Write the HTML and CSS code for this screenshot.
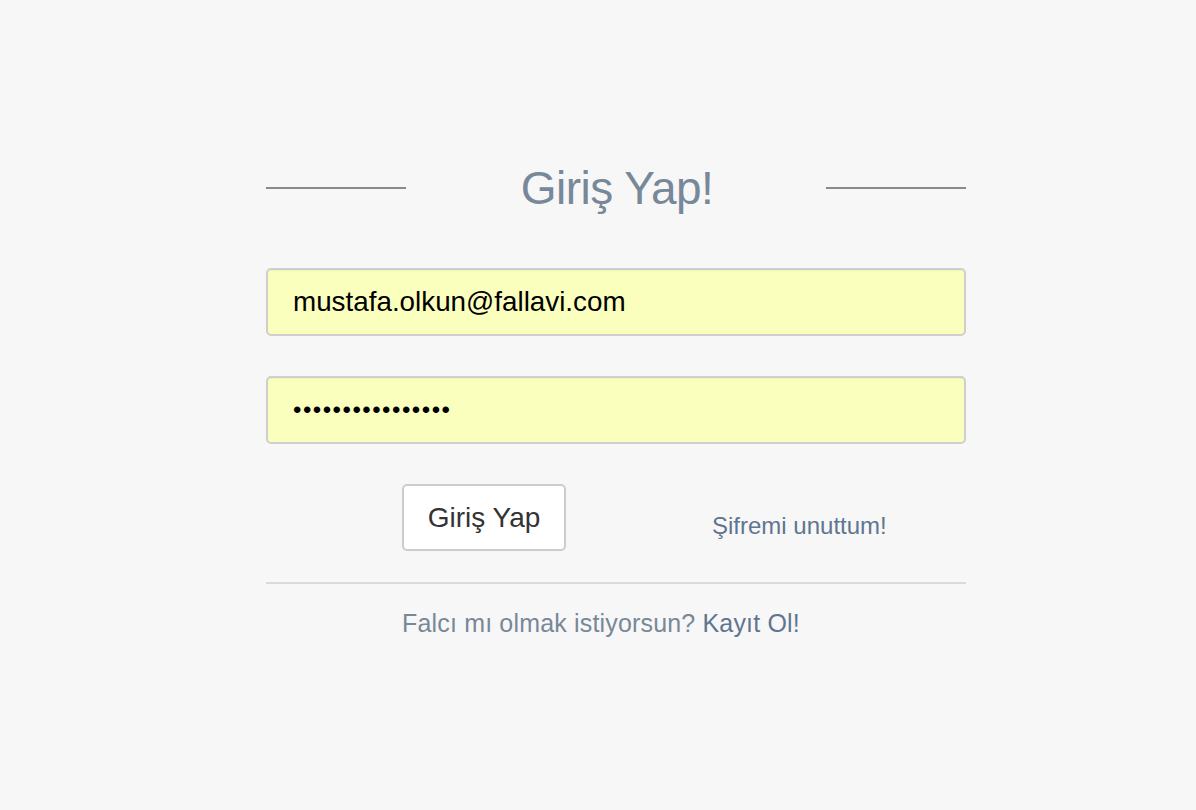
FILE: index.html
```html
<!DOCTYPE html>
<html lang="tr">
<head>
<meta charset="utf-8">
<title>Giriş Yap</title>
<link rel="stylesheet" href="styles.css">
</head>
<body>
<div class="page">
<main class="login">
  <div class="heading">
    <span class="heading-line"></span>
    <h1 class="heading-title">Giriş Yap!</h1>
    <span class="heading-line"></span>
  </div>
  <form class="form">
    <input class="field" type="email" value="mustafa.olkun@fallavi.com">
    <input class="field field-password" type="password" value="abcdefghijklmnop">
    <div class="actions">
      <button class="btn" type="button">Giriş Yap</button>
      <a class="forgot" href="#">Şifremi unuttum!</a>
    </div>
  </form>
  <hr class="divider">
  <p class="signup">Falcı mı olmak istiyorsun? <a class="signup-link" href="#">Kayıt Ol!</a></p>
</main>
</div>
</body>
</html>
```
FILE: styles.css
```css
html, body {
  margin: 0;
  padding: 0;
  background: #f7f7f7;
  font-family: "Liberation Sans", Arial, Helvetica, sans-serif;
}

.page {
  width: 736px;
  margin: 0 auto;
  padding-left: 36px;
  box-sizing: border-box;
}

.login {
  width: 700px;
  padding-top: 163px;
}

.heading {
  display: flex;
  align-items: center;
  justify-content: space-between;
  height: 50px;
}

.heading-line {
  width: 140px;
  height: 2px;
  background: #8a8a8a;
}

.heading-title {
  margin: 0 0 0 2px;
  font-size: 46px;
  font-weight: normal;
  line-height: 50px;
  color: #778899;
  letter-spacing: -0.5px;
}

.form {
  margin-top: 55px;
  display: flex;
  flex-direction: column;
}

.field {
  display: block;
  box-sizing: border-box;
  width: 700px;
  height: 68px;
  margin: 0 0 40px 0;
  padding: 0 25px;
  border: 2px solid #cfcfcf;
  border-radius: 5px;
  background: #faffbd;
  font-family: "Liberation Sans", Arial, Helvetica, sans-serif;
  font-size: 27.8px;
  color: #000;
  outline: none;
  box-shadow: inset 0 1px 1px rgba(0,0,0,0.05);
}

.field-password {
  font-size: 24px;
  letter-spacing: 1.5px;
}

.actions {
  display: flex;
  align-items: flex-start;
  padding-left: 136px;
  height: 68px;
}

.btn {
  box-sizing: border-box;
  width: 164px;
  height: 67px;
  border: 2px solid #cccccc;
  border-radius: 5px;
  background: #ffffff;
  font-family: "Liberation Sans", Arial, Helvetica, sans-serif;
  font-size: 28px;
  color: #333333;
  padding: 0;
  cursor: pointer;
}

.forgot {
  margin-left: 146px;
  margin-top: 28px;
  font-size: 24px;
  color: #5f7590;
  text-decoration: none;
}

.divider {
  margin: 30px 0 0 0;
  border: 0;
  height: 2px;
  background: #dadada;
}

.signup {
  margin: 24px 0 0 0;
  padding-left: 136px;
  font-size: 25px;
  letter-spacing: 0.17px;
  line-height: 30px;
  color: #778899;
}

.signup-link {
  color: #5f7590;
  text-decoration: none;
}
```
